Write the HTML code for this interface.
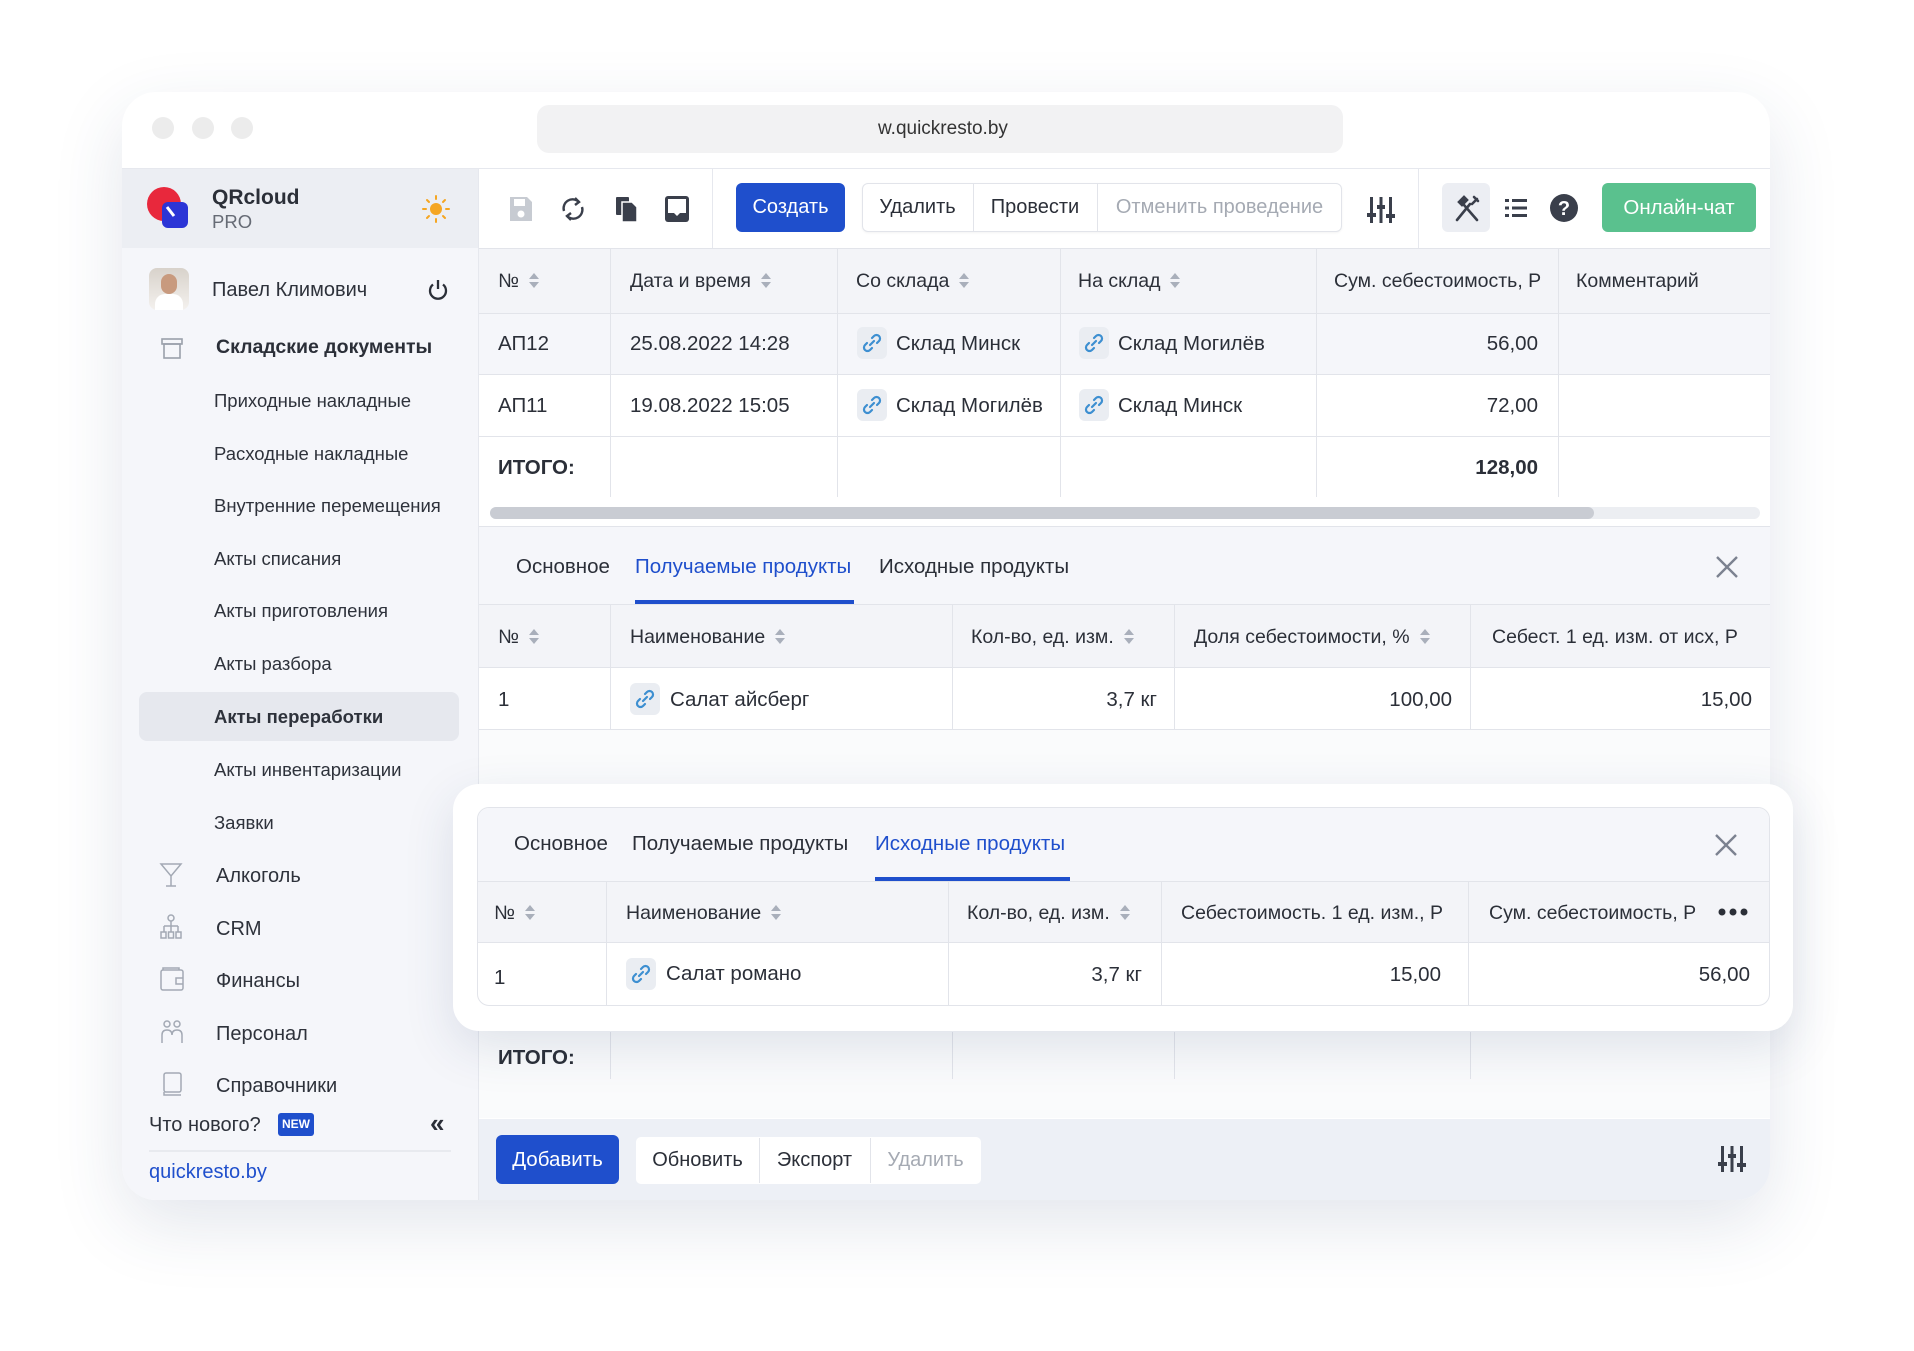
<!DOCTYPE html>
<html><head><meta charset="utf-8"><style>
*{box-sizing:border-box;margin:0;padding:0}
body{width:1914px;height:1351px;background:#fff;font-family:"Liberation Sans",sans-serif;color:#2b2f38;position:relative;overflow:hidden}
.a{position:absolute}
.win{left:122px;top:92px;width:1648px;height:1108px;border-radius:34px;background:#fff;box-shadow:0 24px 70px rgba(40,60,110,.13);overflow:hidden}
.t{position:absolute;white-space:nowrap;font-size:20.5px;line-height:1}
.h{font-size:19.5px!important}
.vl{position:absolute;width:1px;background:#e2e4ea}
.hl{position:absolute;height:1px;background:#e2e4ea}
.sort{display:inline-block;width:10px;height:16px;vertical-align:-2px;margin-left:10px;position:relative}
.sort:before{content:"";position:absolute;left:0;top:0;border:5px solid transparent;border-bottom:6px solid #a9afbb;border-top:0}
.sort:after{content:"";position:absolute;left:0;top:9px;border:5px solid transparent;border-top:6px solid #a9afbb;border-bottom:0}
.lk{position:absolute;width:30px;height:32px;border-radius:6px;background:#eaedf2}
.lk svg{position:absolute;left:4px;top:5px}
.side{color:#2e323b;font-size:18.5px}
.btn{position:absolute;display:flex;align-items:center;justify-content:center;font-size:20px}
</style></head><body>
<div class="a win">
  <div class="a" style="left:30px;top:25px;width:22px;height:22px;border-radius:50%;background:#ececec"></div>
  <div class="a" style="left:70px;top:25px;width:22px;height:22px;border-radius:50%;background:#ececec"></div>
  <div class="a" style="left:109px;top:25px;width:22px;height:22px;border-radius:50%;background:#ececec"></div>
  <div class="a" style="left:415px;top:13px;width:806px;height:48px;border-radius:12px;background:#f2f2f3"></div>
  <div class="t" style="left:756px;top:27px;font-size:19px;color:#333">w.quickresto.by</div>

  <div class="a" style="left:0;top:76px;width:356px;height:1032px;background:#f5f6fa"></div>
  <div class="a" style="left:0;top:76px;width:356px;height:80px;background:#eceef3"></div>
  <div class="a" style="left:0;top:76px;width:1648px;height:1px;background:#e6e8ee"></div>
  <div class="a" style="left:356px;top:76px;width:1px;height:1032px;background:#e6e8ee"></div>
  <svg class="a" style="left:24px;top:94px" width="48" height="48"><circle cx="18" cy="18" r="17" fill="#e8283c"/><rect x="16" y="16" width="26" height="26" rx="6" fill="#2c35d6"/><line x1="21" y1="21" x2="28" y2="30" stroke="#fff" stroke-width="3"/></svg>
  <div class="t" style="left:90px;top:95px;font-size:21px;font-weight:bold;color:#2b2f38">QRcloud</div>
  <div class="t" style="left:90px;top:121px;font-size:18.5px;color:#666b75">PRO</div>
  <svg class="a" style="left:299px;top:102px" width="30" height="30" viewBox="0 0 30 30"><circle cx="15" cy="15" r="6" fill="#f5a623"/><g stroke="#f5a623" stroke-width="2" stroke-linecap="round"><line x1="15" y1="2" x2="15" y2="5"/><line x1="15" y1="25" x2="15" y2="28"/><line x1="2" y1="15" x2="5" y2="15"/><line x1="25" y1="15" x2="28" y2="15"/><line x1="6" y1="6" x2="8" y2="8"/><line x1="22" y1="22" x2="24" y2="24"/><line x1="6" y1="24" x2="8" y2="22"/><line x1="22" y1="8" x2="24" y2="6"/></g></svg>

  <div class="a" style="left:27px;top:176px;width:40px;height:42px;border-radius:8px;background:linear-gradient(#d8d2cb,#f4f1ee)"><div class="a" style="left:12px;top:6px;width:16px;height:20px;border-radius:8px;background:#c89a7e"></div><div class="a" style="left:6px;top:26px;width:28px;height:16px;border-radius:10px 10px 0 0;background:#fff"></div></div>
  <div class="t side" style="left:90px;top:188px;font-size:20px">Павел Климович</div>
  <svg class="a" style="left:304px;top:186px" width="24" height="24" viewBox="0 0 24 24"><path d="M7 6.5A8 8 0 1 0 17 6.5" fill="none" stroke="#2b2f38" stroke-width="2.3"/><line x1="12" y1="2" x2="12" y2="11" stroke="#2b2f38" stroke-width="2.3"/></svg>

  <svg class="a" style="left:38px;top:244px" width="24" height="24" viewBox="0 0 24 24" fill="none" stroke="#9aa0ab" stroke-width="1.6"><rect x="2" y="3" width="20" height="5"/><rect x="4" y="8" width="16" height="14"/></svg>
  <div class="t" style="left:94px;top:246px;font-size:19.5px;font-weight:bold;color:#2b2f38">Складские документы</div>
  <div class="t side" style="left:92px;top:300px">Приходные накладные</div>
  <div class="t side" style="left:92px;top:353px">Расходные накладные</div>
  <div class="t side" style="left:92px;top:405px">Внутренние перемещения</div>
  <div class="t side" style="left:92px;top:458px">Акты списания</div>
  <div class="t side" style="left:92px;top:510px">Акты приготовления</div>
  <div class="t side" style="left:92px;top:563px">Акты разбора</div>
  <div class="a" style="left:17px;top:600px;width:320px;height:49px;border-radius:8px;background:#e6e8ee"></div>
  <div class="t side" style="left:92px;top:616px;font-weight:bold">Акты переработки</div>
  <div class="t side" style="left:92px;top:669px">Акты инвентаризации</div>
  <div class="t side" style="left:92px;top:722px">Заявки</div>
  <svg class="a" style="left:37px;top:770px" width="24" height="26" viewBox="0 0 24 26" fill="none" stroke="#a3a9b4" stroke-width="1.5"><path d="M2 2H22L12 14Z M12 14V24 M7 24H17"/></svg>
  <div class="t side" style="left:94px;top:774px;font-size:20px">Алкоголь</div>
  <svg class="a" style="left:37px;top:822px" width="24" height="26" viewBox="0 0 24 26" fill="none" stroke="#a3a9b4" stroke-width="1.5"><circle cx="12" cy="4" r="3"/><path d="M12 7V12 M5 12H19 M5 12V18 M12 12V18 M19 12V18"/><rect x="2" y="18" width="5" height="6"/><rect x="9.5" y="18" width="5" height="6"/><rect x="17" y="18" width="5" height="6"/></svg>
  <div class="t side" style="left:94px;top:827px;font-size:20px">CRM</div>
  <svg class="a" style="left:37px;top:874px" width="26" height="26" viewBox="0 0 26 26" fill="none" stroke="#a3a9b4" stroke-width="1.5"><rect x="2" y="4" width="22" height="20" rx="2"/><path d="M4 4V2H20V4 M24 12H17V18H24"/></svg>
  <div class="t side" style="left:94px;top:879px;font-size:20px">Финансы</div>
  <svg class="a" style="left:37px;top:927px" width="26" height="26" viewBox="0 0 26 26" fill="none" stroke="#a3a9b4" stroke-width="1.5"><circle cx="8" cy="5" r="3"/><circle cx="18" cy="5" r="3"/><path d="M3 24V16Q3 11 8 11Q13 11 13 16 M13 16Q13 11 18 11Q23 11 23 16V24"/></svg>
  <div class="t side" style="left:94px;top:932px;font-size:20px">Персонал</div>
  <svg class="a" style="left:38px;top:979px" width="24" height="26" viewBox="0 0 24 26" fill="none" stroke="#a3a9b4" stroke-width="1.5"><rect x="4" y="2" width="17" height="19" rx="2"/><path d="M4 21V24H21"/></svg>
  <div class="t side" style="left:94px;top:984px;font-size:20px">Справочники</div>
  <div class="t" style="left:27px;top:1023px;font-size:20px;color:#2e323b">Что нового?</div>
  <div class="a" style="left:156px;top:1021px;width:36px;height:23px;border-radius:3px;background:#1f4fcc;color:#fff;font-size:12px;font-weight:bold;text-align:center;line-height:23px">NEW</div>
  <div class="t" style="left:308px;top:1018px;font-size:26px;color:#2b2f38;font-weight:bold">«</div>
  <div class="a" style="left:27px;top:1058px;width:302px;height:2px;background:#e8eaef"></div>
  <div class="t" style="left:27px;top:1070px;font-size:20px;color:#1f4fcc">quickresto.by</div>

  <svg class="a" style="left:386px;top:103px" width="26" height="28" viewBox="0 0 26 28"><path d="M2 2H19L24 7V26H2Z" fill="#c7cbd2"/><rect x="6" y="4" width="11" height="7" fill="#fff"/><circle cx="13" cy="19" r="3.5" fill="#fff"/></svg>
  <svg class="a" style="left:438px;top:102px" width="26" height="30" viewBox="0 0 26 30" fill="none" stroke="#3a3f4b" stroke-width="2.4"><path d="M4 17A9 9 0 0 1 19 8"/><path d="M22 13A9 9 0 0 1 7 22"/><path d="M15 4L19 8L15 11" /><path d="M11 19L7 22L11 26"/></svg>
  <svg class="a" style="left:492px;top:103px" width="24" height="28" viewBox="0 0 24 28"><rect x="2" y="2" width="13" height="18" rx="1" fill="#3a3f4b"/><path d="M8 7H18L23 12V27H8Z" fill="#3a3f4b" stroke="#fff" stroke-width="1.5"/></svg>
  <svg class="a" style="left:542px;top:103px" width="26" height="28" viewBox="0 0 26 28"><rect x="1" y="1" width="24" height="26" rx="3" fill="#3a3f4b"/><path d="M4 4H22V18H16L13 21L10 18H4Z" fill="#fff"/></svg>
  <div class="a" style="left:590px;top:76px;width:1px;height:80px;background:#e6e8ee"></div>
  <div class="btn" style="left:614px;top:91px;width:109px;height:49px;border-radius:6px;background:#1f4fcc;color:#fff">Создать</div>
  <div class="a" style="left:740px;top:91px;width:480px;height:49px;border:1px solid #e2e4ea;border-radius:6px;box-shadow:0 1px 2px rgba(0,0,0,.05)"></div>
  <div class="btn" style="left:740px;top:91px;width:111px;height:49px">Удалить</div>
  <div class="a" style="left:851px;top:92px;width:1px;height:47px;background:#e2e4ea"></div>
  <div class="btn" style="left:851px;top:91px;width:124px;height:49px">Провести</div>
  <div class="a" style="left:975px;top:92px;width:1px;height:47px;background:#e2e4ea"></div>
  <div class="btn" style="left:975px;top:91px;width:245px;height:49px;color:#a5aab3">Отменить проведение</div>
  <svg class="a" style="left:1245px;top:103px" width="28" height="30" viewBox="0 0 28 30" fill="#3a3f4b"><rect x="3" y="2" width="3" height="26"/><rect x="12.5" y="2" width="3" height="26"/><rect x="22" y="2" width="3" height="26"/><rect x="0" y="18" width="9" height="4"/><rect x="10" y="10" width="8" height="4"/><rect x="19" y="19" width="9" height="4"/></svg>
  <div class="a" style="left:1296px;top:76px;width:1px;height:80px;background:#e6e8ee"></div>
  <div class="a" style="left:1320px;top:91px;width:48px;height:49px;border-radius:6px;background:#eceef3"></div>
  <svg class="a" style="left:1330px;top:101px" width="30" height="30" viewBox="0 0 30 30" fill="none" stroke="#3a3f4b" stroke-width="2.6" stroke-linecap="round"><path d="M5 27L18 11"/><path d="M25 27L12 12"/><path d="M7 9L12 4L15 7L10 12Z" fill="#3a3f4b"/><path d="M20 11L25 6"/><path d="M22 4L26 8"/></svg>
  <svg class="a" style="left:1382px;top:104px" width="24" height="24" viewBox="0 0 24 24" fill="#3a3f4b"><rect x="1" y="3" width="4" height="3"/><rect x="8" y="3" width="15" height="3"/><rect x="1" y="10.5" width="4" height="3"/><rect x="8" y="10.5" width="15" height="3"/><rect x="1" y="18" width="4" height="3"/><rect x="8" y="18" width="15" height="3"/></svg>
  <svg class="a" style="left:1427px;top:101px" width="30" height="30" viewBox="0 0 30 30"><circle cx="15" cy="15" r="14" fill="#3a3f4b"/><text x="15" y="22" text-anchor="middle" font-family="Liberation Sans" font-weight="bold" font-size="20" fill="#fff">?</text></svg>
  <div class="btn" style="left:1480px;top:91px;width:154px;height:49px;border-radius:6px;background:#5ac18e;color:#fff;font-size:20.5px">Онлайн-чат</div>

  <div class="a" style="left:357px;top:156px;width:1291px;height:65px;background:#f3f4f8"></div>
  <div class="a" style="left:357px;top:221px;width:1291px;height:61px;background:#f5f6fa"></div>
  <div class="hl" style="left:357px;top:156px;width:1291px"></div>
  <div class="hl" style="left:357px;top:221px;width:1291px"></div>
  <div class="hl" style="left:357px;top:282px;width:1291px"></div>
  <div class="hl" style="left:357px;top:344px;width:1291px"></div>
  <div class="vl" style="left:488px;top:156px;height:249px"></div>
  <div class="vl" style="left:715px;top:156px;height:249px"></div>
  <div class="vl" style="left:938px;top:156px;height:249px"></div>
  <div class="vl" style="left:1194px;top:156px;height:249px"></div>
  <div class="vl" style="left:1436px;top:156px;height:249px"></div>
  <div class="t h" style="left:376px;top:180px">№<span class="sort"></span></div>
  <div class="t h" style="left:508px;top:180px">Дата и время<span class="sort"></span></div>
  <div class="t h" style="left:734px;top:180px">Со склада<span class="sort"></span></div>
  <div class="t h" style="left:956px;top:180px">На склад<span class="sort"></span></div>
  <div class="t h" style="left:1212px;top:180px">Сум. себестоимость, Р</div>
  <div class="t h" style="left:1454px;top:180px">Комментарий</div>

  <div class="t" style="left:376px;top:242px">АП12</div>
  <div class="t" style="left:508px;top:242px">25.08.2022 14:28</div>
  <div class="lk" style="left:735px;top:235px"><svg width="22" height="22" viewBox="0 0 22 22" fill="none" stroke="#3d8fd1" stroke-width="2.2" stroke-linecap="round"><path d="M9 13L13 9"/><path d="M11 6L13 4A3.5 3.5 0 0 1 18 9L16 11"/><path d="M11 16L9 18A3.5 3.5 0 0 1 4 13L6 11"/></svg></div>
  <div class="t" style="left:774px;top:242px">Склад Минск</div>
  <div class="lk" style="left:957px;top:235px"><svg width="22" height="22" viewBox="0 0 22 22" fill="none" stroke="#3d8fd1" stroke-width="2.2" stroke-linecap="round"><path d="M9 13L13 9"/><path d="M11 6L13 4A3.5 3.5 0 0 1 18 9L16 11"/><path d="M11 16L9 18A3.5 3.5 0 0 1 4 13L6 11"/></svg></div>
  <div class="t" style="left:996px;top:242px">Склад Могилёв</div>
  <div class="t" style="left:1416px;top:242px;transform:translateX(-100%)">56,00</div>

  <div class="t" style="left:376px;top:304px">АП11</div>
  <div class="t" style="left:508px;top:304px">19.08.2022 15:05</div>
  <div class="lk" style="left:735px;top:297px"><svg width="22" height="22" viewBox="0 0 22 22" fill="none" stroke="#3d8fd1" stroke-width="2.2" stroke-linecap="round"><path d="M9 13L13 9"/><path d="M11 6L13 4A3.5 3.5 0 0 1 18 9L16 11"/><path d="M11 16L9 18A3.5 3.5 0 0 1 4 13L6 11"/></svg></div>
  <div class="t" style="left:774px;top:304px">Склад Могилёв</div>
  <div class="lk" style="left:957px;top:297px"><svg width="22" height="22" viewBox="0 0 22 22" fill="none" stroke="#3d8fd1" stroke-width="2.2" stroke-linecap="round"><path d="M9 13L13 9"/><path d="M11 6L13 4A3.5 3.5 0 0 1 18 9L16 11"/><path d="M11 16L9 18A3.5 3.5 0 0 1 4 13L6 11"/></svg></div>
  <div class="t" style="left:996px;top:304px">Склад Минск</div>
  <div class="t" style="left:1416px;top:304px;transform:translateX(-100%)">72,00</div>

  <div class="t" style="left:376px;top:366px;font-weight:bold">ИТОГО:</div>
  <div class="t" style="left:1416px;top:366px;transform:translateX(-100%);font-weight:bold">128,00</div>

  <div class="a" style="left:368px;top:415px;width:1270px;height:12px;border-radius:6px;background:#eceef2"></div>
  <div class="a" style="left:368px;top:415px;width:1104px;height:12px;border-radius:6px;background:#c9ccd3"></div>

  <div class="a" style="left:357px;top:434px;width:1291px;height:592px;background:#fafbfc"></div>
  <div class="hl" style="left:357px;top:434px;width:1291px"></div>
  <div class="a" style="left:357px;top:435px;width:1291px;height:77px;background:#f5f6fa"></div>
  <div class="t" style="left:394px;top:465px">Основное</div>
  <div class="t" style="left:513px;top:465px;color:#1f4fcc">Получаемые продукты</div>
  <div class="a" style="left:513px;top:508px;width:219px;height:4px;background:#1f4fcc"></div>
  <div class="t" style="left:757px;top:465px">Исходные продукты</div>
  <svg class="a" style="left:1593px;top:463px" width="24" height="24" viewBox="0 0 24 24" stroke="#7c8290" stroke-width="2.4"><path d="M2 2L22 22M22 2L2 22"/></svg>
  <div class="hl" style="left:357px;top:512px;width:1291px"></div>
  <div class="a" style="left:357px;top:513px;width:1291px;height:62px;background:#f3f4f8"></div>
  <div class="a" style="left:357px;top:575px;width:1291px;height:62px;background:#fff"></div>
  <div class="hl" style="left:357px;top:575px;width:1291px"></div>
  <div class="hl" style="left:357px;top:637px;width:1291px"></div>
  <div class="vl" style="left:488px;top:512px;height:125px"></div>
  <div class="vl" style="left:830px;top:512px;height:125px"></div>
  <div class="vl" style="left:1052px;top:512px;height:125px"></div>
  <div class="vl" style="left:1348px;top:512px;height:125px"></div>
  <div class="t h" style="left:376px;top:536px">№<span class="sort"></span></div>
  <div class="t h" style="left:508px;top:536px">Наименование<span class="sort"></span></div>
  <div class="t h" style="left:849px;top:536px">Кол-во, ед. изм.<span class="sort"></span></div>
  <div class="t h" style="left:1072px;top:536px">Доля себестоимости, %<span class="sort"></span></div>
  <div class="t h" style="left:1370px;top:536px">Себест. 1 ед. изм. от исх, Р</div>
  <div class="t" style="left:376px;top:598px">1</div>
  <div class="lk" style="left:508px;top:591px"><svg width="22" height="22" viewBox="0 0 22 22" fill="none" stroke="#3d8fd1" stroke-width="2.2" stroke-linecap="round"><path d="M9 13L13 9"/><path d="M11 6L13 4A3.5 3.5 0 0 1 18 9L16 11"/><path d="M11 16L9 18A3.5 3.5 0 0 1 4 13L6 11"/></svg></div>
  <div class="t" style="left:548px;top:598px">Салат айсберг</div>
  <div class="t" style="left:1035px;top:598px;transform:translateX(-100%)">3,7 кг</div>
  <div class="t" style="left:1330px;top:598px;transform:translateX(-100%)">100,00</div>
  <div class="t" style="left:1630px;top:598px;transform:translateX(-100%)">15,00</div>

  <div class="vl" style="left:488px;top:940px;height:47px"></div>
  <div class="vl" style="left:830px;top:940px;height:47px"></div>
  <div class="vl" style="left:1052px;top:940px;height:47px"></div>
  <div class="vl" style="left:1348px;top:940px;height:47px"></div>
  <div class="t" style="left:376px;top:956px;font-weight:bold">ИТОГО:</div>

  <div class="a" style="left:357px;top:1027px;width:1291px;height:81px;background:#edf0f6"></div>
  <div class="btn" style="left:374px;top:1043px;width:123px;height:49px;border-radius:6px;background:#1f4fcc;color:#fff;font-size:20.5px">Добавить</div>
  <div class="a" style="left:514px;top:1045px;width:345px;height:47px;border-radius:5px;background:#fff"></div>
  <div class="btn" style="left:514px;top:1045px;width:123px;height:47px">Обновить</div>
  <div class="a" style="left:637px;top:1046px;width:1px;height:45px;background:#e2e4ea"></div>
  <div class="btn" style="left:637px;top:1045px;width:111px;height:47px">Экспорт</div>
  <div class="a" style="left:748px;top:1046px;width:1px;height:45px;background:#e2e4ea"></div>
  <div class="btn" style="left:748px;top:1045px;width:111px;height:47px;color:#a5aab3">Удалить</div>
  <svg class="a" style="left:1596px;top:1052px" width="28" height="30" viewBox="0 0 28 30" fill="#3a3f4b"><rect x="3" y="2" width="3" height="26"/><rect x="12.5" y="2" width="3" height="26"/><rect x="22" y="2" width="3" height="26"/><rect x="0" y="18" width="9" height="4"/><rect x="10" y="10" width="8" height="4"/><rect x="19" y="19" width="9" height="4"/></svg>
</div>

<div class="a" style="left:453px;top:784px;width:1340px;height:247px;border-radius:26px;background:#fff;box-shadow:0 16px 50px rgba(40,60,110,.13)"></div>
<div class="a" style="left:477px;top:807px;width:1293px;height:199px;border:1px solid #e2e4ea;border-radius:12px;background:#fff;overflow:hidden">
  <div class="a" style="left:0;top:0;width:1293px;height:73px;background:#f5f6fa"></div>
  <div class="t" style="left:36px;top:26px">Основное</div>
  <div class="t" style="left:154px;top:26px">Получаемые продукты</div>
  <div class="t" style="left:397px;top:26px;color:#1f4fcc">Исходные продукты</div>
  <div class="a" style="left:397px;top:69px;width:195px;height:4px;background:#1f4fcc"></div>
  <svg class="a" style="left:1236px;top:25px" width="24" height="24" viewBox="0 0 24 24" stroke="#7c8290" stroke-width="2.4"><path d="M2 2L22 22M22 2L2 22"/></svg>
  <div class="hl" style="left:0;top:73px;width:1293px"></div>
  <div class="a" style="left:0;top:74px;width:1293px;height:60px;background:#f3f4f8"></div>
  <div class="hl" style="left:0;top:134px;width:1293px"></div>
  <div class="vl" style="left:128px;top:73px;height:126px"></div>
  <div class="vl" style="left:470px;top:73px;height:126px"></div>
  <div class="vl" style="left:683px;top:73px;height:126px"></div>
  <div class="vl" style="left:990px;top:73px;height:126px"></div>
  <div class="t h" style="left:16px;top:96px">№<span class="sort"></span></div>
  <div class="t h" style="left:148px;top:96px">Наименование<span class="sort"></span></div>
  <div class="t h" style="left:489px;top:96px">Кол-во, ед. изм.<span class="sort"></span></div>
  <div class="t h" style="left:703px;top:96px">Себестоимость. 1 ед. изм., Р</div>
  <div class="t h" style="left:1011px;top:96px">Сум. себестоимость, Р</div>
  <svg class="a" style="left:1240px;top:100px" width="30" height="8" viewBox="0 0 30 8" fill="#2b2f38"><circle cx="4" cy="4" r="3.5"/><circle cx="15" cy="4" r="3.5"/><circle cx="26" cy="4" r="3.5"/></svg>
  <div class="t" style="left:16px;top:160px">1</div>
  <div class="lk" style="left:148px;top:150px"><svg width="22" height="22" viewBox="0 0 22 22" fill="none" stroke="#3d8fd1" stroke-width="2.2" stroke-linecap="round"><path d="M9 13L13 9"/><path d="M11 6L13 4A3.5 3.5 0 0 1 18 9L16 11"/><path d="M11 16L9 18A3.5 3.5 0 0 1 4 13L6 11"/></svg></div>
  <div class="t" style="left:188px;top:156px">Салат романо</div>
  <div class="t" style="left:664px;top:157px;transform:translateX(-100%)">3,7 кг</div>
  <div class="t" style="left:963px;top:157px;transform:translateX(-100%)">15,00</div>
  <div class="t" style="left:1272px;top:157px;transform:translateX(-100%)">56,00</div>
</div>
</body></html>
